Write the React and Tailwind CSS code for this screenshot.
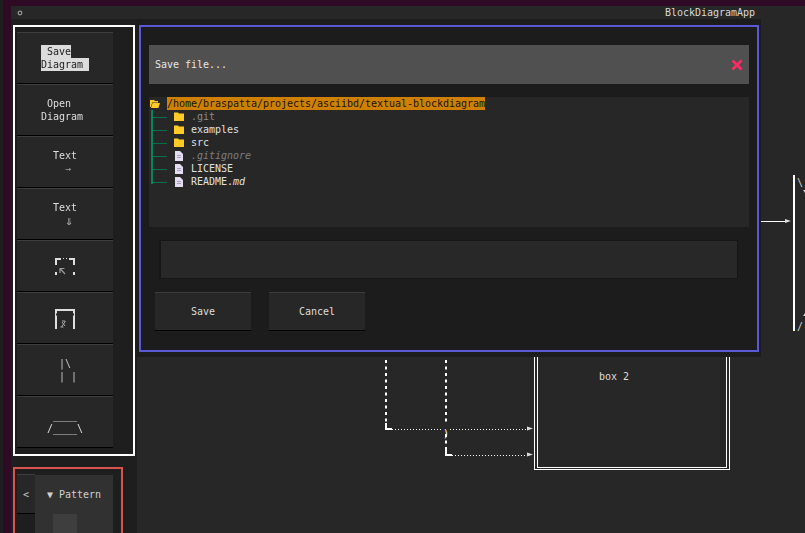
const mono = "font-['DejaVu_Sans_Mono',monospace]";

const FolderIcon = ({ open }) => (
  <svg width="10" height="9" viewBox="0 0 10 9" className="shrink-0">
    {open ? (
      <path d="M0 1h4l1 1h3v1.5H2.2L0.8 8H0z M2.6 4H10L8.4 9H1z" fill="#ffca28" />
    ) : (
      <path d="M0 0.5h4l1 1h5V9H0z" fill="#ffca28" />
    )}
  </svg>
);

const FileIcon = () => (
  <svg width="8" height="10" viewBox="0 0 8 10" className="shrink-0 ml-[1px]">
    <path d="M0 0h5l3 3v7H0z" fill="#e4dcf0" />
    <path d="M2 4h4v1H2zM2 6h4v1H2z" fill="#a79fb8" />
  </svg>
);

const SideButton = ({ children }) => (
  <div className="h-[52px] w-[96px] shrink-0 flex items-center justify-center bg-[#272727] border-t border-t-[#3d3d3d] border-b border-b-black text-[#dedede] whitespace-pre leading-[13px]">
    <div className="will-change-transform">{children}</div>
  </div>
);

const treeRows = [
  { name: '.git', dir: true, cls: 'text-[#8a8a8a]' },
  { name: 'examples', dir: true, cls: 'text-[#e0e0e0]' },
  { name: 'src', dir: true, cls: 'text-[#e0e0e0]' },
  { name: '.gitignore', cls: 'text-[#7d7d7d] italic' },
  { name: 'LICENSE', cls: 'text-[#e0e0e0]' },
  { name: 'README.', ext: 'md', cls: 'text-[#e0e0e0]' },
];

const FileDialog = () => (
  <div className="absolute left-0 top-0 w-[624px] h-[338px] bg-[#1c1c1c] pl-[2px] pt-[6px]">
    <div className="w-[620px] h-[327px] border-2 border-[#5a5ad6] px-[8px] pt-[18px] flex flex-col">
      <div className="h-[39px] shrink-0 bg-[#505050] flex items-center justify-between pl-[6px] pr-[6px] text-[#e6e6e6]">
        <span>Save file...</span>
        <svg width="12" height="12" viewBox="0 0 12 12">
          <path d="M1.5 1.5l9 9M10.5 1.5l-9 9" stroke="#ff2a5f" strokeWidth="2.6" />
        </svg>
      </div>
      <div className="h-[130px] shrink-0 mt-[13px] bg-[#272727] leading-[13px]">
        <div className="flex items-center h-[13px]">
          <span className="w-[18px] pl-[1px] flex items-center"><FolderIcon open /></span>
          <span className="bg-[#d08000] text-[#141414]">/home/braspatta/projects/asciibd/textual-blockdiagram</span>
        </div>
        {treeRows.map((row, i) => (
          <div key={row.name} className="flex h-[13px] pl-[2px]">
            <div className={`w-[16px] shrink-0 border-l-2 border-[#00875a] ${i === treeRows.length - 1 ? 'h-[9px]' : 'h-[13px]'}`}>
              <div className="h-px mt-[7px] bg-[#00704c]" />
            </div>
            <span className="w-[24px] shrink-0 pl-[7px] flex items-center">
              {row.dir ? <FolderIcon /> : <FileIcon />}
            </span>
            <span className={row.cls}>
              {row.name}
              {row.ext && <i>{row.ext}</i>}
            </span>
          </div>
        ))}
      </div>
      <div className="h-[39px] shrink-0 mt-[13px] ml-[10px] mr-[11px] bg-[#282828] border border-[#161616] border-l-2" />
      <div className="flex gap-[18px] mt-[13px] ml-[6px]">
        <div className="w-[96px] h-[39px] flex items-center justify-center bg-[#272727] border-t border-t-[#3d3d3d] border-b border-b-black text-[#dedede]">Save</div>
        <div className="w-[96px] h-[39px] flex items-center justify-center bg-[#272727] border-t border-t-[#3d3d3d] border-b border-b-black text-[#dedede]">Cancel</div>
      </div>
    </div>
  </div>
);

const Diagram = () => (
  <>
    <svg className="absolute left-0 top-0" width="668" height="514" viewBox="137 19 668 514" fill="none">
      <path d="M386 360V424M446 360V424M446 434V450" stroke="#fff" strokeWidth="2" strokeDasharray="3 3.5" />
      <path d="M386 423V429H392M446 449V455H452" stroke="#fff" strokeWidth="2" />
      <path d="M392 429.5H443M450 429.5H528M452 455.5H528" stroke="#fff" strokeDasharray="1 2" />
      <path d="M527 426.5L533 428.5L527 430.5zM527 452.5L533 454.5L527 456.5z" fill="#ddd" />
      <path d="M761 221.5H786" stroke="#fff" />
      <path d="M785 219L791 221L785 223z" fill="#ddd" />
      <path d="M794 175V331" stroke="#fff" strokeWidth="2" />
      <path d="M803 190H805V193zM803 316H805V313z" fill="#ccc" />
    </svg>
    <span className="absolute left-[306px] top-[408px] leading-[13px] text-white">)</span>
    <span className="absolute left-[660px] top-[157px] leading-[13px] text-[#cfcfcf]">\</span>
    <span className="absolute left-[660px] top-[301px] leading-[13px] text-[#cfcfcf]">/</span>
    <div className="absolute left-[397px] top-[300px] w-[196px] h-[151px] border border-white px-[2px] pb-[1px]">
      <div className="h-full border border-t-0 border-white pt-[50px] pl-[61px] leading-[13px] text-[#dedede]">
        box 2
      </div>
    </div>
  </>
);

export default function App() {
  return (
    <div className={`w-[805px] h-[533px] overflow-hidden flex bg-[#2e0a25] text-[10px] tracking-[-0.02px] ${mono}`}>
      <div className="w-[3px] h-full shrink-0 bg-[#1e1e1e]" />
      <div className="flex-1 min-w-0 pl-[8px] pt-[6px] flex flex-col">
        <div className="h-[13px] shrink-0 bg-[#272727] flex items-center justify-between pl-[6px] pr-[50px] text-[#d8d8d8]">
          <svg width="6" height="6" viewBox="0 0 6 6" fill="none">
            <circle cx="3" cy="3" r="1.8" stroke="#9a9a9a" strokeWidth="1.2" />
          </svg>
          <span>BlockDiagramApp</span>
        </div>
        <div className="flex-1 min-h-0 flex">
          <div className="w-[126px] shrink-0 bg-[#1e1e1e] pl-[2px] pt-[6px] overflow-hidden">
            <div className="w-[122px] h-[431px] border-2 border-white pl-[2px] pt-[5px] flex flex-col">
              <SideButton>
                <div className="flex flex-col items-start text-[#222]">
                  <span className="bg-[#dcdcdc]"> Save</span>
                  <span className="bg-[#dcdcdc]">Diagram </span>
                </div>
              </SideButton>
              <SideButton>
                <div className="flex flex-col items-start">
                  <span> Open</span>
                  <span>Diagram </span>
                </div>
              </SideButton>
              <SideButton>
                <div>
                  <div>Text</div>
                  <div className="pl-[12px] text-[#a0a0a0]">→</div>
                </div>
              </SideButton>
              <SideButton>
                <div>
                  <div>Text</div>
                  <div className="pl-[12px] text-[13px] font-bold text-[#a0a0a0]">⇓</div>
                </div>
              </SideButton>
              <SideButton>
                <svg width="20" height="18" viewBox="0 0 20 18" fill="none" className="mt-[2px]">
                  <path d="M1 7V1H6M14 1H19V7" stroke="#dedede" strokeWidth="2" />
                  <path d="M8 0.5h1M11 0.5h1" stroke="#dedede" />
                  <path d="M1 14v3M19 14v3" stroke="#dedede" strokeWidth="2" />
                  <path d="M5 15V10.5H9.5M5.5 11l4.5 5" stroke="#9a9a9a" strokeWidth="1.2" />
                </svg>
              </SideButton>
              <SideButton>
                <svg width="20" height="20" viewBox="0 0 20 20" fill="none" className="mt-[1px]">
                  <path d="M1 20V1H19V20" stroke="#dedede" strokeWidth="2" />
                  <path d="M1 5.5H2M18 5.5H19" stroke="#272727" strokeWidth="2" />
                  <path d="M7 12h3M6.5 18L10.5 12M7 13l3 4M5.5 18h3" stroke="#a8a8a8" />
                </svg>
              </SideButton>
              <SideButton>
                <div className="pl-[6px] text-[#c8c8c8]">
                  <div>{'|\\ '}</div>
                  <div>{'| |'}</div>
                </div>
              </SideButton>
              <SideButton>
                <div className="text-center">
                  <div>____</div>
                  <div>/____\</div>
                </div>
              </SideButton>
            </div>
            <div className="w-[110px] h-[80px] mt-[11px] border-2 border-[#d9534f] pl-[2px] pt-[5px] flex items-start">
              <div className="w-[18px] h-[40px] shrink-0 flex items-center justify-center bg-[#272727] border-t border-t-[#3d3d3d] border-b border-b-black text-[#c8c8c8]">&lt;</div>
              <div className="w-[78px] h-[70px] mt-[1px] bg-[#313131] text-[#d0d0d0] pt-[13px]">
                <div className="leading-[13px] pl-[12px]">▼ Pattern</div>
                <div className="w-[24px] h-[30px] mt-[13px] ml-[18px] bg-[#3e3e3e]" />
              </div>
            </div>
          </div>
          <div className="flex-1 min-w-0 relative bg-[#272727]">
            <Diagram />
            <FileDialog />
          </div>
        </div>
      </div>
    </div>
  );
}
